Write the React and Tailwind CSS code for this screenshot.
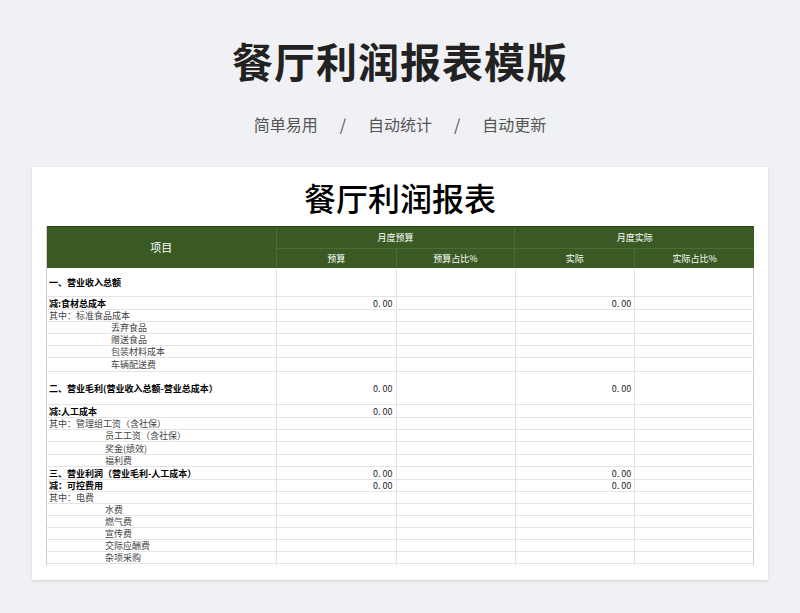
const rows = [
  { t: "一、营业收入总额", h: 29, b: true },
  { t: "减:食材总成本", h: 13, b: true, v: true },
  { t: "其中：标准食品成本", h: 12 },
  { t: "丢弃食品", h: 12, i: 62 },
  { t: "赠送食品", h: 12, i: 62 },
  { t: "包装材料成本", h: 12, i: 62 },
  { t: "车辆配送费", h: 14, i: 62 },
  { t: "二、营业毛利(营业收入总额-营业总成本）", h: 33, b: true, v: true },
  { t: "减:人工成本", h: 13, b: true, v: true, vo: true },
  { t: "其中：管理组工资（含社保）", h: 12 },
  { t: "员工工资（含社保）", h: 12, i: 56 },
  { t: "奖金(绩效)", h: 13, i: 56 },
  { t: "福利费", h: 12, i: 56 },
  { t: "三、营业利润（营业毛利-人工成本）", h: 13, b: true, v: true },
  { t: "减：可控费用", h: 12, b: true, v: true },
  { t: "其中：电费", h: 12 },
  { t: "水费", h: 12, i: 56 },
  { t: "燃气费", h: 12, i: 56 },
  { t: "宣传费", h: 12, i: 56 },
  { t: "交际应酬费", h: 12, i: 56 },
  { t: "杂项采购", h: 12, i: 56 },
  { t: "", h: 12 },
];
const serif = { fontFamily: '"Noto Sans CJK SC", serif' };

export default function App() {
  return (
    <div className="w-[800px] h-[613px] overflow-hidden bg-[#eff1f4] flex flex-col items-center" style={{ fontFamily: '"Noto Sans CJK SC", sans-serif' }}>
      <h1 className="mt-[33px] text-[41px] leading-[54px] font-bold text-[#222] tracking-[1px]">餐厅利润报表模版</h1>
      <div className="mt-[26px] flex gap-[22px] text-[16px] text-[#555] leading-[22px]">
        <span>简单易用</span><span>/</span><span>自动统计</span><span>/</span><span>自动更新</span>
      </div>
      <div className="mt-[32px] w-[736px] h-[413px] bg-white shadow-sm px-[14px] overflow-hidden">
        <div className="h-[59px] flex items-center justify-center text-[32px] font-medium text-black" style={serif}>餐厅利润报表</div>
        <div className="h-[340px] overflow-hidden border-l border-[#cfcfcf] text-[9px]">
          <div className="flex h-[42px] bg-[#3a5a24] text-white border-t border-[#2a451a]" style={serif}>
            <div className="w-[230px] flex items-center justify-center text-[11px] border-r border-[#4c6b39]">项目</div>
            {["月度预算", "月度实际"].map((g, gi) => (
              <div key={g} className={`w-[239px] flex flex-col ${gi === 0 ? "border-r border-[#4c6b39]" : ""}`}>
                <div className="h-[22px] flex items-center justify-center border-b border-[#4c6b39]">{g}</div>
                <div className="flex flex-1">
                  <div className="w-[120px] flex items-center justify-center border-r border-[#4c6b39]">{gi ? "实际" : "预算"}</div>
                  <div className="flex-1 flex items-center justify-center">{gi ? "实际占比%" : "预算占比%"}</div>
                </div>
              </div>
            ))}
          </div>
          {rows.map((r, k) => (
            <div key={k} className="flex border-b border-[#e4e4e4] text-[#222]" style={{ height: r.h }}>
              <div className={`w-[230px] flex items-center whitespace-nowrap leading-none border-r border-[#e4e4e4] ${r.b ? "font-bold text-black" : "text-[#444]"}`} style={{ ...serif, paddingLeft: 2 + (r.i || 0) }}>{r.t}</div>
              <div className="w-[120px] flex items-center justify-end pr-[3px] leading-none border-r border-[#e4e4e4]" style={serif}>{r.v ? "0. 00" : ""}</div>
              <div className="w-[120px] border-r border-[#e4e4e4]" />
              <div className="w-[119px] flex items-center justify-end pr-[3px] leading-none border-r border-[#e4e4e4]" style={serif}>{r.v && !r.vo ? "0. 00" : ""}</div>
              <div className="w-[119px] border-r border-[#cfcfcf]" />
            </div>
          ))}
        </div>
      </div>
    </div>
  );
}
